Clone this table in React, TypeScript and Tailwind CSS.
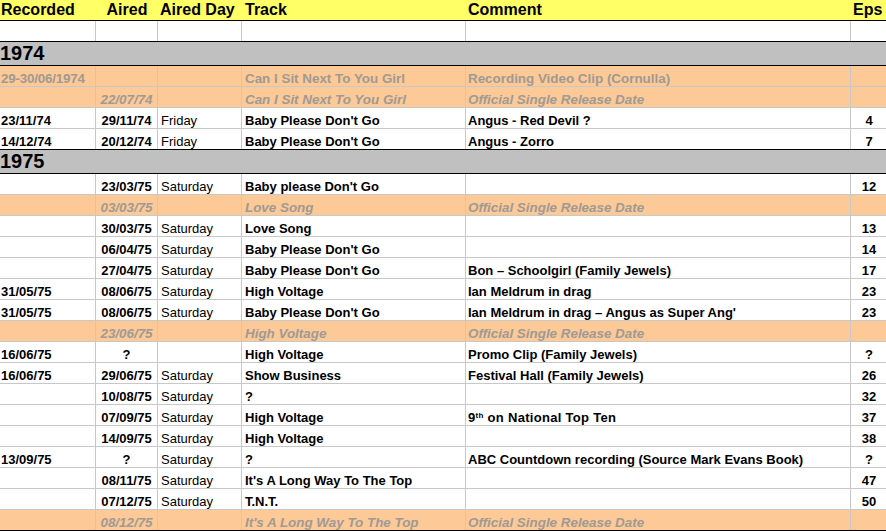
import React from "react";

type Kind = "data" | "release" | "clip";

type Row = {
  kind: Kind;
  rec?: string;
  aired?: string;
  day?: string;
  track?: string;
  comment?: React.ReactNode;
  eps?: string;
};

type Section = { year: string; rows: Row[] };

const SECTIONS: Section[] = [
  {
    year: "1974",
    rows: [
      {
        kind: "clip",
        rec: "29-30/06/1974",
        track: "Can I Sit Next To You Girl",
        comment: "Recording Video Clip (Cornulla)",
      },
      {
        kind: "release",
        aired: "22/07/74",
        track: "Can I Sit Next To You Girl",
        comment: "Official Single Release Date",
      },
      {
        kind: "data",
        rec: "23/11/74",
        aired: "29/11/74",
        day: "Friday",
        track: "Baby Please Don't Go",
        comment: "Angus - Red Devil ?",
        eps: "4",
      },
      {
        kind: "data",
        rec: "14/12/74",
        aired: "20/12/74",
        day: "Friday",
        track: "Baby Please Don't Go",
        comment: "Angus - Zorro",
        eps: "7",
      },
    ],
  },
  {
    year: "1975",
    rows: [
      { kind: "data", aired: "23/03/75", day: "Saturday", track: "Baby please Don't Go", eps: "12" },
      { kind: "release", aired: "03/03/75", track: "Love Song", comment: "Official Single Release Date" },
      { kind: "data", aired: "30/03/75", day: "Saturday", track: "Love Song", eps: "13" },
      { kind: "data", aired: "06/04/75", day: "Saturday", track: "Baby Please Don't Go", eps: "14" },
      {
        kind: "data",
        aired: "27/04/75",
        day: "Saturday",
        track: "Baby Please Don't Go",
        comment: "Bon – Schoolgirl (Family Jewels)",
        eps: "17",
      },
      {
        kind: "data",
        rec: "31/05/75",
        aired: "08/06/75",
        day: "Saturday",
        track: "High Voltage",
        comment: "Ian Meldrum in drag",
        eps: "23",
      },
      {
        kind: "data",
        rec: "31/05/75",
        aired: "08/06/75",
        day: "Saturday",
        track: "Baby Please Don't Go",
        comment: "Ian Meldrum in drag – Angus as Super Ang'",
        eps: "23",
      },
      { kind: "release", aired: "23/06/75", track: "High Voltage", comment: "Official Single Release Date" },
      {
        kind: "data",
        rec: "16/06/75",
        aired: "?",
        track: "High Voltage",
        comment: "Promo Clip (Family Jewels)",
        eps: "?",
      },
      {
        kind: "data",
        rec: "16/06/75",
        aired: "29/06/75",
        day: "Saturday",
        track: "Show Business",
        comment: "Festival Hall (Family Jewels)",
        eps: "26",
      },
      { kind: "data", aired: "10/08/75", day: "Saturday", track: "?", eps: "32" },
      {
        kind: "data",
        aired: "07/09/75",
        day: "Saturday",
        track: "High Voltage",
        comment: (
          <span className="tracking-[0.3px]">
            9<sup className="text-[8px] font-bold">th</sup> on National Top Ten
          </span>
        ),
        eps: "37",
      },
      { kind: "data", aired: "14/09/75", day: "Saturday", track: "High Voltage", eps: "38" },
      {
        kind: "data",
        rec: "13/09/75",
        aired: "?",
        day: "Saturday",
        track: "?",
        comment: "ABC Countdown recording (Source Mark Evans Book)",
        eps: "?",
      },
      { kind: "data", aired: "08/11/75", day: "Saturday", track: "It's A Long Way To The Top", eps: "47" },
      { kind: "data", aired: "07/12/75", day: "Saturday", track: "T.N.T.", eps: "50" },
      {
        kind: "release",
        aired: "08/12/75",
        track: "It's A Long Way To The Top",
        comment: "Official Single Release Date",
      },
    ],
  },
];

const COLS = "grid grid-cols-[96px_62px_84px_224px_385px_35px]";
const CELL = "flex items-end overflow-hidden whitespace-nowrap leading-[15px]";

const DataRow = ({ row, edge }: { row: Row; edge: boolean }) => {
  const orange = row.kind !== "data";
  const bg = orange ? "bg-[#fcc997]" : "bg-white";
  const text = orange ? "text-[#a09a94] text-[13.4px]" : "text-black text-[13px]";
  const italic = row.kind === "release" ? "italic" : "";
  const bottom = edge ? "border-b-black" : "border-b-[#c8c8c8]";
  const line = "border-r border-r-[#c8c8c8]";

  return (
    <div className={`${COLS} h-[21px] border-b ${bottom} ${bg} ${text} ${italic} font-bold`}>
      <div className={`${CELL} ${line} pl-[1px] ${row.kind === "clip" ? "tracking-[-0.2px]" : ""}`}>
        {row.rec}
      </div>
      <div className={`${CELL} ${line} justify-center`}>{row.aired}</div>
      <div className={`${CELL} ${line} pl-[3px] font-normal`}>{row.day}</div>
      <div className={`${CELL} ${line} pl-[3px]`}>{row.track}</div>
      <div className={`${CELL} ${line} pl-[2px]`}>{row.comment}</div>
      <div className={`${CELL} justify-center pl-[1px]`}>{row.eps}</div>
    </div>
  );
};

export default function App() {
  return (
    <div className="h-[531px] w-[886px] overflow-hidden bg-white font-['Liberation_Sans',Arial,sans-serif]">
      {/* Header */}
      <div className={`${COLS} h-[21px] border-b border-b-black bg-[#ffff66] text-[16px] font-bold leading-[18px]`}>
        <div className="flex items-center pl-[1px]">Recorded</div>
        <div className="flex items-center justify-center">Aired</div>
        <div className="flex items-center pl-[2px]">Aired Day</div>
        <div className="flex items-center pl-[3px]">Track</div>
        <div className="flex items-center pl-[2px]">Comment</div>
        <div className="flex items-center pl-[2px]">Eps</div>
      </div>

      {/* Blank row */}
      <div className={`${COLS} h-[21px] border-b border-b-black`}>
        <div className="border-r border-r-[#c8c8c8]" />
        <div className="border-r border-r-[#c8c8c8]" />
        <div className="border-r border-r-[#c8c8c8]" />
        <div className="border-r border-r-[#c8c8c8]" />
        <div className="border-r border-r-[#c8c8c8]" />
        <div />
      </div>

      {SECTIONS.map((section) => (
        <div key={section.year}>
          <div className="flex h-[24px] items-end border-b border-b-black bg-[#c0c0c0] pb-[1px] text-[20px] font-bold leading-[22px]">
            {section.year}
          </div>
          {section.rows.map((row, i) => (
            <DataRow key={i} row={row} edge={i === section.rows.length - 1} />
          ))}
        </div>
      ))}
    </div>
  );
}
